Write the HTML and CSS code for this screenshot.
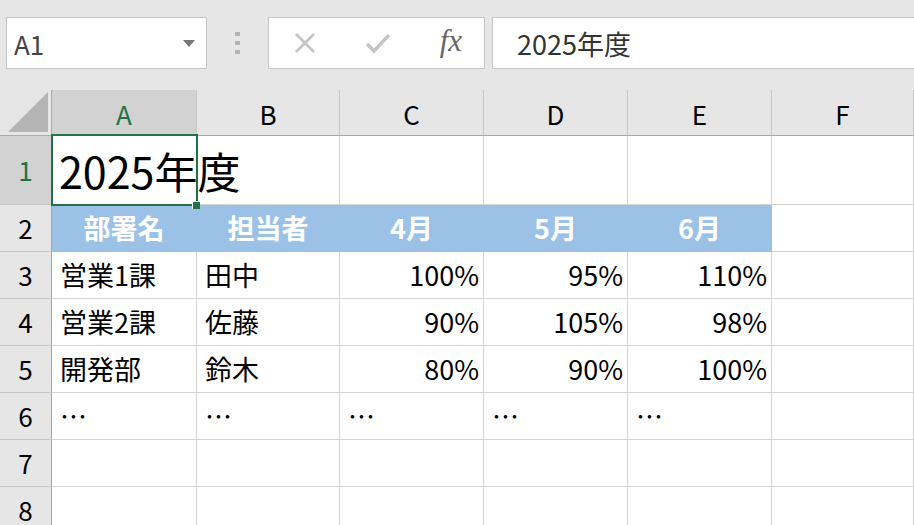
FILE: index.html
```html
<!DOCTYPE html>
<html lang="ja">
<head>
    <meta charset="UTF-8">
    <title>Book1 - Excel</title>
    <link rel="stylesheet" href="styles.css">
</head>
<body>

<div class="formula-bar">
    <div class="name-box">
        <span>A1</span>
        <svg class="caret" width="12" height="7" viewBox="0 0 12 7"><polygon points="0,0 12,0 6,7" fill="#777"/></svg>
    </div>
    <div class="grip"><i></i><i></i><i></i></div>
    <div class="fx-buttons">
        <svg width="22" height="22" viewBox="0 0 22 22"><path d="M2 2 L20 20 M20 2 L2 20" stroke="#c4c4c4" stroke-width="2.6" fill="none"/></svg>
        <svg width="26" height="22" viewBox="0 0 26 22"><path d="M2 12 L9 19 L24 3" stroke="#c4c4c4" stroke-width="3.4" fill="none"/></svg>
        <span class="fx">fx</span>
    </div>
    <div class="formula-input">2025年度</div>
</div>

<div class="sheet">
    <!-- column headers -->
    <div class="corner">
        <svg width="40" height="40" viewBox="0 0 40 40"><polygon points="40,0 40,40 0,40" fill="#b4b4b4"/></svg>
    </div>
    <div class="col-head active">A</div>
    <div class="col-head">B</div>
    <div class="col-head">C</div>
    <div class="col-head">D</div>
    <div class="col-head">E</div>
    <div class="col-head">F</div>

    <!-- row 1 -->
    <div class="row-head active tall">1</div>
    <div class="cell tall selected title">2025年度</div>
    <div class="cell tall"></div>
    <div class="cell tall"></div>
    <div class="cell tall"></div>
    <div class="cell tall"></div>
    <div class="cell tall"></div>

    <!-- row 2 -->
    <div class="row-head">2</div>
    <div class="cell band">部署名</div>
    <div class="cell band">担当者</div>
    <div class="cell band">4月</div>
    <div class="cell band">5月</div>
    <div class="cell band">6月</div>
    <div class="cell"></div>

    <!-- row 3 -->
    <div class="row-head">3</div>
    <div class="cell">営業1課</div>
    <div class="cell">田中</div>
    <div class="cell num">100%</div>
    <div class="cell num">95%</div>
    <div class="cell num">110%</div>
    <div class="cell"></div>

    <!-- row 4 -->
    <div class="row-head">4</div>
    <div class="cell">営業2課</div>
    <div class="cell">佐藤</div>
    <div class="cell num">90%</div>
    <div class="cell num">105%</div>
    <div class="cell num">98%</div>
    <div class="cell"></div>

    <!-- row 5 -->
    <div class="row-head">5</div>
    <div class="cell">開発部</div>
    <div class="cell">鈴木</div>
    <div class="cell num">80%</div>
    <div class="cell num">90%</div>
    <div class="cell num">100%</div>
    <div class="cell"></div>

    <!-- row 6 -->
    <div class="row-head">6</div>
    <div class="cell">…</div>
    <div class="cell">…</div>
    <div class="cell">…</div>
    <div class="cell">…</div>
    <div class="cell">…</div>
    <div class="cell"></div>

    <!-- row 7 -->
    <div class="row-head">7</div>
    <div class="cell"></div>
    <div class="cell"></div>
    <div class="cell"></div>
    <div class="cell"></div>
    <div class="cell"></div>
    <div class="cell"></div>

    <!-- row 8 -->
    <div class="row-head">8</div>
    <div class="cell"></div>
    <div class="cell"></div>
    <div class="cell"></div>
    <div class="cell"></div>
    <div class="cell"></div>
    <div class="cell"></div>
</div>

</body>
</html>
```

FILE: styles.css
```css
body {
    margin: 0;
    padding: 0;
    background-color: #e6e6e6;
    font-family: 'Noto Sans CJK JP', 'Noto Sans', sans-serif;
    color: #000;
    overflow: hidden;
}

/* Formula bar */
.formula-bar {
    display: flex;
    align-items: center;
    height: 90px;
    padding: 0 0 4px 6px;
    box-sizing: border-box;
}

.name-box,
.fx-buttons,
.formula-input {
    height: 52px;
    box-sizing: border-box;
    background-color: #fff;
    border: 1px solid #c6c6c6;
    display: flex;
    align-items: center;
}

.name-box {
    width: 201px;
    padding: 0 11px 0 7px;
    justify-content: space-between;
    font-size: 26px;
    color: #444;
}

.grip {
    width: 61px;
    display: flex;
    flex-direction: column;
    align-items: center;
    gap: 5px;
}

.grip i {
    width: 5px;
    height: 4px;
    background-color: #b4b4b4;
}

.fx-buttons {
    width: 217px;
    padding: 0 22px 0 25px;
    justify-content: space-between;
}

.fx {
    font-family: 'Liberation Serif', 'DejaVu Serif', serif;
    font-style: italic;
    font-size: 31px;
    color: #666;
    margin-top: -4px;
}

.formula-input {
    flex: 1;
    margin-left: 7px;
    margin-right: -4px;
    padding-left: 24px;
    font-size: 27px;
    color: #333;
}

/* Sheet grid */
.sheet {
    display: grid;
    grid-template-columns: 52px 145px 143px 144px 144px 144px 1fr;
    grid-template-rows: 46px 69px repeat(7, 47px);
    background-color: #fff;
}

.corner,
.col-head,
.row-head {
    background-color: #e6e6e6;
    box-sizing: border-box;
    display: flex;
    align-items: center;
    justify-content: center;
    font-size: 26px;
    color: #000;
}

.corner {
    border-right: 1px solid #ababab;
    border-bottom: 1px solid #ababab;
    align-items: flex-end;
    justify-content: flex-end;
    padding: 0 3px 3px 0;
}

.col-head {
    border-right: 1px solid #c6c6c6;
    border-bottom: 1px solid #a6a6a6;
    padding-top: 2px;
}

.row-head {
    border-right: 1px solid #a6a6a6;
    border-bottom: 1px solid #c6c6c6;
    padding-bottom: 2px;
}

.col-head.active,
.row-head.active {
    background-color: #d2d2d2;
    color: #217346;
}

.cell {
    box-sizing: border-box;
    border-right: 1px solid #d4d4d4;
    border-bottom: 1px solid #d4d4d4;
    padding: 0 4px 2px 8px;
    font-size: 27px;
    white-space: nowrap;
    display: flex;
    align-items: center;
}

.cell.num {
    justify-content: flex-end;
}

.cell.band {
    background-color: #9bc2e6;
    border-color: #9bc2e6;
    color: #fff;
    font-weight: bold;
    justify-content: center;
    padding-left: 0;
    padding-right: 0;
}

.cell.title {
    font-size: 43px;
    padding-left: 7px;
    padding-bottom: 0;
}

/* Selected cell outline and fill handle */
.cell.selected {
    position: relative;
    z-index: 1;
    overflow: visible;
}

.cell.selected::after {
    content: "";
    position: absolute;
    left: -1px;
    top: -2px;
    right: -2px;
    bottom: -2px;
    border: 2px solid #217346;
}

.cell.selected::before {
    content: "";
    position: absolute;
    right: -4px;
    bottom: -5px;
    width: 7px;
    height: 7px;
    background-color: #217346;
    border-left: 1px solid #fff;
    border-top: 1px solid #fff;
    z-index: 2;
}
```
